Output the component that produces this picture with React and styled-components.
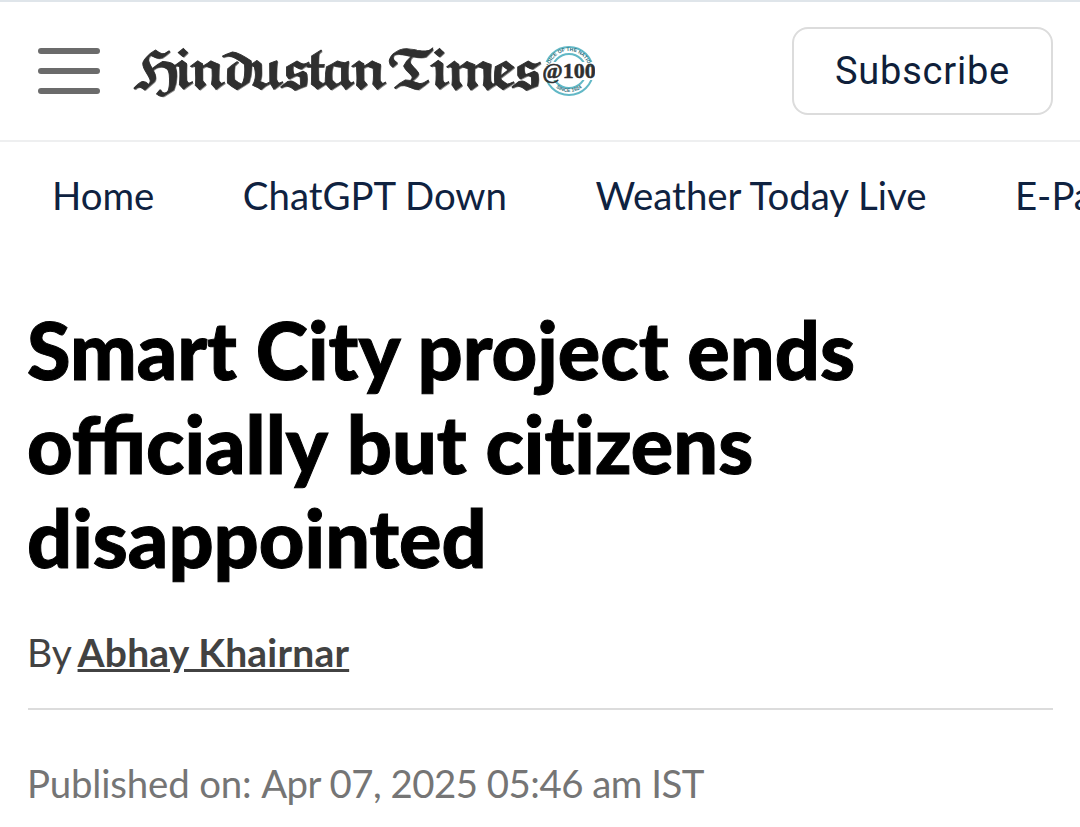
import React from "react";
import styled, { createGlobalStyle } from "styled-components";

const GlobalStyle = createGlobalStyle`
  html, body { margin: 0; padding: 0; background: #fff; overflow: hidden; }
  body { font-family: "Lato", "Liberation Sans", sans-serif; }
`;

const Page = styled.div`
  width: 1080px;
  height: 827px;
  overflow: hidden;
  border-top: 2px solid #dfe5ea;
  box-sizing: border-box;
`;

const Header = styled.header`
  height: 140px;
  box-sizing: border-box;
  border-bottom: 2px solid #eeeff0;
  display: flex;
  align-items: center;
  padding: 0 27px 0 38px;
`;

const Burger = styled.div`
  width: 62px;
  display: flex;
  flex-direction: column;
  gap: 14px;
  margin-right: 30px;
`;

const BurgerLine = styled.span`
  display: block;
  height: 6px;
  border-radius: 3px;
  background: #6b6b6b;
`;

const Logo = styled.div`
  display: flex;
  align-items: center;
  flex: 1;
`;

const Wordmark = styled.span`
  font-family: "DejaVu Math TeX Gyre", "DejaVu Serif", "Liberation Serif", serif;
  font-size: 50px;
  line-height: 1;
  letter-spacing: -10.2px;
  margin-top: 3px;
  white-space: nowrap;
  color: #2f2f2f;
  -webkit-text-stroke: 0.9px #2f2f2f;
  text-shadow: 1px 1px 0 #8a8a8a;
`;

const Seal = styled.svg`
  width: 52px;
  height: 52px;
  margin-left: 9px;
  flex: none;
`;

const SubscribeButton = styled.button`
  width: 261px;
  height: 88px;
  box-sizing: border-box;
  background: #fff;
  border: 2px solid #dcdcdc;
  border-radius: 16px;
  color: #0f1f3a;
  font-family: "Roboto", sans-serif;
  font-size: 38px;
  letter-spacing: 0.8px;
  padding: 0;
`;

const Nav = styled.nav`
  display: flex;
  gap: 88.5px;
  padding: 30px 0 0 52px;
  white-space: nowrap;
  overflow: hidden;
`;

const NavItem = styled.a`
  color: #0f2240;
  font-size: 38.4px;
  line-height: 46px;
`;

const Article = styled.article`
  padding: 85px 27px 0 28px;
`;

const Headline = styled.h1`
  margin: 0 0 0 -1px;
  color: #000;
  font-size: 79.2px;
  font-weight: 900;
  line-height: 94px;
  font-variant-ligatures: none;
  -webkit-text-stroke: 1px #000;
`;

const Ligature = styled.span`
  font-variant-ligatures: common-ligatures;
`;

const Byline = styled.div`
  margin-top: 44px;
  color: #424242;
  font-size: 39px;
  line-height: 46px;
  letter-spacing: -0.1px;
  text-indent: -1px;
  padding-bottom: 33px;
  border-bottom: 2px solid #dcdcdc;
`;

const Author = styled.a`
  font-weight: 700;
  margin-left: -3px;
  letter-spacing: 0.2px;
  text-decoration: underline;
`;

const Published = styled.div`
  margin-top: 50px;
  color: #757575;
  font-size: 38.4px;
  line-height: 46px;
  letter-spacing: -0.15px;
  text-indent: -1px;
`;

const PublishedDate = styled.span`
  letter-spacing: -0.52px;
`;

const navItems = ["Home", "ChatGPT Down", "Weather Today Live", "E-Paper"];

export default function App() {
  return (
    <Page>
      <GlobalStyle />
      <Header>
        <Burger>
          <BurgerLine />
          <BurgerLine />
          <BurgerLine />
        </Burger>
        <Logo>
          <Wordmark aria-label="Hindustan Times">𝕳𝖎𝖓𝖉𝖚𝖘𝖙𝖆𝖓 𝕿𝖎𝖒𝖊𝖘</Wordmark>
          <Seal viewBox="0 0 52 52">
            <defs>
              <path id="sealTop" d="M6 26a20 20 0 0 1 40 0" />
              <path id="sealBottom" d="M5 26a21 21 0 0 0 42 0" />
            </defs>
            <circle cx="26" cy="26" r="24" fill="none" stroke="#62b8c6" strokeWidth="2" />
            <circle cx="26" cy="26" r="17" fill="none" stroke="#62b8c6" strokeWidth="2" />
            <rect x="0" y="17" width="52" height="18" fill="#fff" />
            <text fontFamily="Liberation Sans" fontWeight="700" fontSize="5" fill="#2f6f7c">
              <textPath href="#sealTop" startOffset="50%" textAnchor="middle">VOICE OF THE NATION</textPath>
            </text>
            <text fontFamily="Liberation Sans" fontWeight="700" fontSize="5" fill="#2f6f7c">
              <textPath href="#sealBottom" startOffset="50%" textAnchor="middle">SINCE 1924</textPath>
            </text>
            <text x="26" y="33" textAnchor="middle" fontFamily="Liberation Serif" fontWeight="700" fontSize="22" fill="#2f2f2f" stroke="#2f2f2f" strokeWidth="0.5">@100</text>
          </Seal>
        </Logo>
        <SubscribeButton>Subscribe</SubscribeButton>
      </Header>
      <Nav>
        {navItems.map((item) => (
          <NavItem key={item}>{item}</NavItem>
        ))}
      </Nav>
      <Article>
        <Headline>
          Smart City project ends <Ligature>officially</Ligature> but citizens disappointed
        </Headline>
        <Byline>
          By <Author>Abhay Khairnar</Author>
        </Byline>
        <Published>
          Published on: <PublishedDate>Apr 07, 2025 05:46 am IST</PublishedDate>
        </Published>
      </Article>
    </Page>
  );
}
